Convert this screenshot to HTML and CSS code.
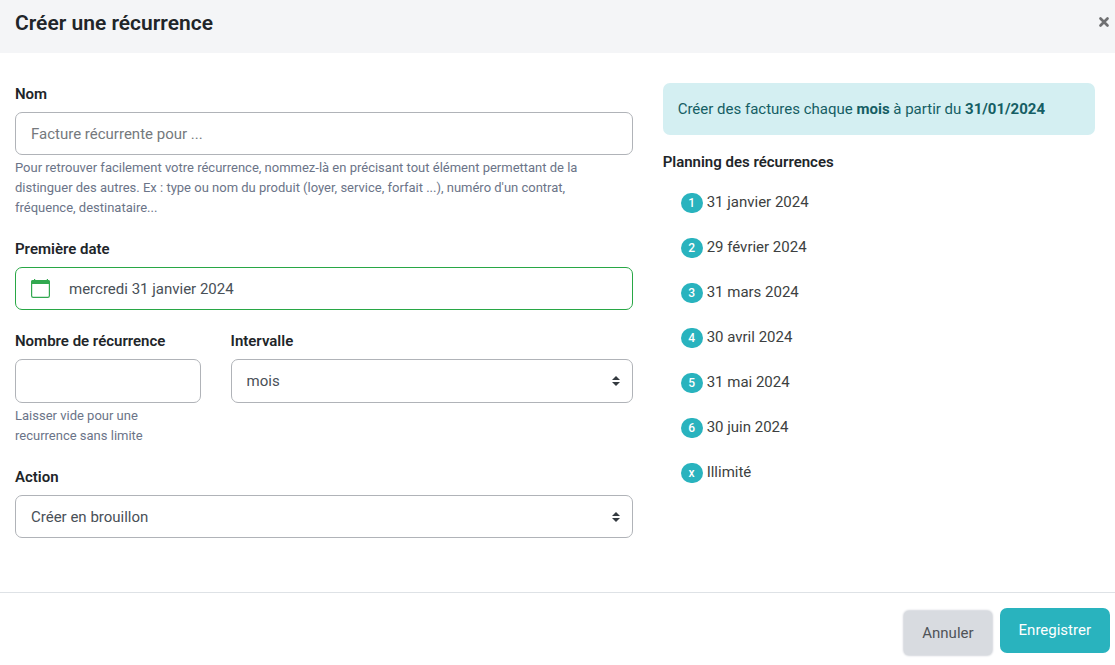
FILE: index.html
```html
<!DOCTYPE html>
<html lang="fr">
<head>
<meta charset="utf-8">
<meta name="viewport" content="width=device-width, initial-scale=1">
<title>Créer une récurrence</title>
<link rel="stylesheet" href="styles.css">
</head>
<body>
<form class="dialog">
  <header class="dialog-header">
    <h1 class="dialog-title">Créer une récurrence</h1>
    <button class="close" type="button" aria-label="Fermer">
      <svg width="12" height="12" viewBox="0 0 12 12" aria-hidden="true"><path d="M2.5 2.5l7 7M9.5 2.5l-7 7" fill="none" stroke="currentColor" stroke-width="2.7" stroke-linecap="round"/></svg>
    </button>
  </header>

  <main class="dialog-body">
    <div class="fields">
      <div class="field">
        <label class="label" for="name">Nom</label>
        <input class="control" id="name" type="text" placeholder="Facture récurrente pour ..." aria-describedby="name-help">
        <p class="help" id="name-help">Pour retrouver facilement votre récurrence, nommez-là en précisant tout élément permettant de la distinguer des autres. Ex : type ou nom du produit (loyer, service, forfait ...), numéro d'un contrat, fréquence, destinataire...</p>
      </div>

      <div class="field">
        <label class="label" for="date">Première date</label>
        <div class="control date-control">
          <svg class="date-icon" width="20" height="20" viewBox="0 0 20 20" aria-hidden="true">
            <path d="M3.6 0v2M16.4 0v2" stroke="currentColor" stroke-width="1.2"/>
            <rect x="0.6" y="1.6" width="17.8" height="16.8" rx="1.6" fill="none" stroke="currentColor" stroke-width="1.2"/>
            <path d="M0 5V3Q0 1 2 1H17Q19 1 19 3V5Z" fill="currentColor"/>
          </svg>
          <input class="date-input" id="date" type="text" value="mercredi 31 janvier 2024">
        </div>
      </div>

      <div class="field-row">
        <div class="field">
          <label class="label" for="count">Nombre de récurrence</label>
          <input class="control control-tall" id="count" type="text" aria-describedby="count-help">
          <p class="help" id="count-help">Laisser vide pour une recurrence sans limite</p>
        </div>
        <div class="field">
          <label class="label" for="interval">Intervalle</label>
          <div class="select">
            <select class="control control-tall" id="interval"><option>mois</option></select>
            <svg class="select-arrows" width="8" height="10" viewBox="0 0 8 10" aria-hidden="true"><path d="M4 0l4 4H0zM4 10L0 6h8z" fill="currentColor"/></svg>
          </div>
        </div>
      </div>

      <div class="field">
        <label class="label" for="action">Action</label>
        <div class="select">
          <select class="control" id="action"><option>Créer en brouillon</option></select>
          <svg class="select-arrows" width="8" height="10" viewBox="0 0 8 10" aria-hidden="true"><path d="M4 0l4 4H0zM4 10L0 6h8z" fill="currentColor"/></svg>
        </div>
      </div>
    </div>

    <section class="summary">
      <p class="notice">Créer des factures chaque <strong>mois</strong> à partir du <strong>31/01/2024</strong></p>
      <h2 class="label">Planning des récurrences</h2>
      <ul class="schedule">
        <li class="occurrence"><span class="badge">1</span>31 janvier 2024</li>
        <li class="occurrence"><span class="badge">2</span>29 février 2024</li>
        <li class="occurrence"><span class="badge">3</span>31 mars 2024</li>
        <li class="occurrence"><span class="badge">4</span>30 avril 2024</li>
        <li class="occurrence"><span class="badge">5</span>31 mai 2024</li>
        <li class="occurrence"><span class="badge">6</span>30 juin 2024</li>
        <li class="occurrence"><span class="badge">x</span>Illimité</li>
      </ul>
    </section>
  </main>

  <footer class="dialog-footer">
    <button class="button button-cancel" type="button">Annuler</button>
    <button class="button button-save" type="submit">Enregistrer</button>
  </footer>
</form>
</body>
</html>
```
FILE: styles.css
```css
* {
  box-sizing: border-box;
}

body {
  margin: 0;
  background: #fff;
  color: #3d3f41;
  font: 15px/22px Roboto, "Liberation Sans", sans-serif;
}

.dialog {
  display: flex;
  flex-direction: column;
  min-height: 100vh;
}

.dialog-header {
  display: flex;
  justify-content: space-between;
  align-items: flex-start;
  padding: 8px 5px 15px 15px;
  background: #f4f5f7;
}

.dialog-title {
  margin: 0;
  color: #212529;
  font-size: 21px;
  line-height: 30px;
  font-weight: 600;
}

.close {
  display: flex;
  margin: 0;
  padding: 8px 0;
  border: 0;
  background: none;
  color: #6f7072;
}

.dialog-body {
  flex: 1;
  display: grid;
  grid-template-columns: 10fr 7fr;
  align-items: start;
  gap: 30px;
  padding: 30px 20px 30px 15px;
}

.fields {
  display: grid;
  gap: 20px;
}

.field-row {
  display: grid;
  grid-template-columns: 6fr 13fr;
  gap: 30px;
}

.label {
  display: block;
  margin: 0 0 7px;
  color: #212529;
  font-size: 15px;
  line-height: 22px;
  font-weight: 600;
}

.control {
  display: block;
  width: 100%;
  height: 43px;
  padding: 0 15px;
  border: 1px solid #b0b3b8;
  border-radius: 7px;
  background: #fff;
  color: #495057;
  font: inherit;
}

.control-tall {
  height: 44px;
}

.control::placeholder {
  color: #75797d;
  opacity: 1;
}

.help {
  margin: 3px 0 0;
  padding-right: 20px;
  color: #6b7488;
  font-size: 13px;
  line-height: 20px;
}

.date-control {
  display: flex;
  align-items: center;
  gap: 18px;
  border-color: #28a745;
}

.date-icon {
  flex: none;
  color: #31a84f;
}

.date-input {
  flex: 1;
  min-width: 0;
  padding: 0;
  border: 0;
  outline: 0;
  background: none;
  color: #495057;
  font: inherit;
}

.select {
  position: relative;
}

.select .control {
  appearance: none;
}

.select-arrows {
  position: absolute;
  top: 0;
  bottom: 0;
  right: 13px;
  margin: auto 0;
  color: #343a40;
  pointer-events: none;
}

.notice {
  margin: 0 0 16px;
  padding: 15px;
  border-radius: 7px;
  background: #d4eff2;
  color: #155e64;
}

.schedule {
  margin: 0;
  padding: 0 18px;
  list-style: none;
}

.occurrence {
  display: flex;
  align-items: flex-end;
  gap: 4px;
  padding: 11px 0 12px;
}

.badge {
  min-width: 22px;
  border-radius: 10px;
  background: #29b3be;
  color: #fff;
  font-size: 12px;
  line-height: 20px;
  font-weight: 500;
  text-align: center;
}

.dialog-footer {
  display: flex;
  justify-content: flex-end;
  align-items: flex-end;
  gap: 8px;
  min-height: 73px;
  padding: 15px 5px 10px;
  border-top: 1px solid #dee2e6;
}

.button {
  padding: 11px 18px;
  border: 1px solid transparent;
  border-radius: 7px;
  font: inherit;
}

.button-cancel {
  padding: 10px 18px;
  border: 0;
  border-radius: 5px;
  background: #d8dbe0;
  color: #4f5358;
  line-height: 24px;
  box-shadow: 0 0 2px 1px #d3d6dc;
}

.button-save {
  align-self: flex-start;
  background: #29b3be;
  color: #fff;
  line-height: 21px;
}
```
